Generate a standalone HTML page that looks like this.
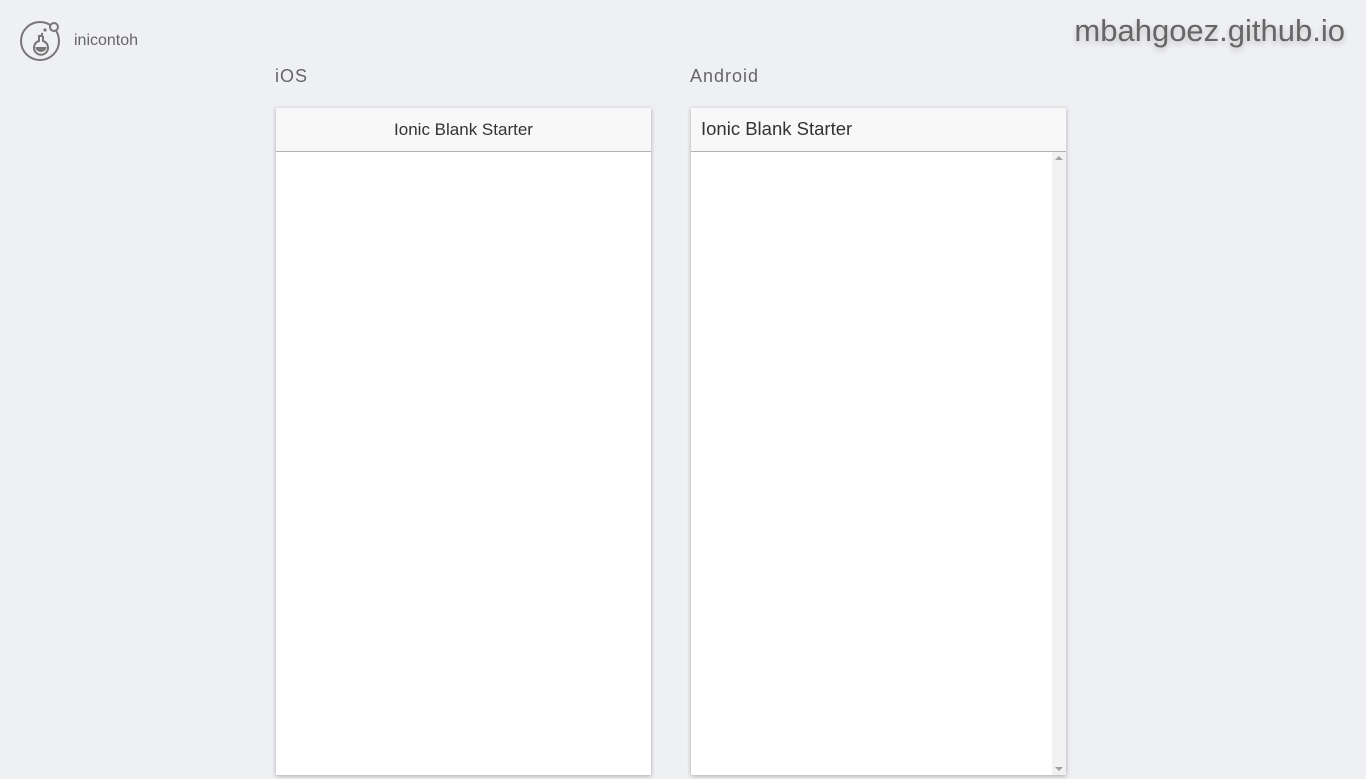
<!DOCTYPE html>
<html><head><style>
body{margin:0;width:1366px;height:779px;background:#eff0f3;font-family:"Liberation Sans",sans-serif;position:relative;overflow:hidden}
.a{position:absolute}
.frame{position:absolute;top:108px;width:375px;height:667px;background:#fff;box-shadow:0 1px 4px rgba(0,0,0,.3)}
.hdr{height:43px;background:#f8f8f8;border-bottom:1px solid #b2b2b2;color:#333;font-size:17px;line-height:43px}
</style></head><body>
<svg class="a" style="left:19px;top:19px" width="42" height="42" viewBox="0 0 42 42">
<circle cx="21" cy="22" r="19" fill="none" stroke="#777" stroke-width="2"/>
<circle cx="35" cy="8" r="4" fill="#eff0f3" stroke="#777" stroke-width="2"/>
<circle cx="26" cy="11" r="1.6" fill="#777"/><circle cx="23" cy="15" r="1.2" fill="#777"/>
<path d="M19 17h5M20 17v5a7 7 0 1 0 4 0v-5" fill="none" stroke="#777" stroke-width="2"/>
<path d="M16.5 28a5.5 5 0 0 0 11 0z" fill="#777"/>
</svg>
<div class="a" style="left:74px;top:32px;font-size:16px;color:#666">inicontoh</div>
<div class="a" style="right:21px;top:13px;font-size:31px;color:#666;text-shadow:0 3px 6px rgba(0,0,0,.2)">mbahgoez.github.io</div>
<div class="a" style="left:275px;top:66px;font-size:18px;color:#666;letter-spacing:1px">iOS</div>
<div class="a" style="left:690px;top:66px;font-size:18px;color:#666;letter-spacing:1px">Android</div>
<div class="frame" style="left:276px"><div class="hdr" style="text-align:center">Ionic Blank Starter</div></div>
<div class="frame" style="left:691px"><div class="hdr" style="padding-left:10px;font-size:18.5px;line-height:42px">Ionic Blank Starter</div>
<div class="a" style="right:0;top:44px;width:14px;height:623px;background:#f1f1f1"></div>
<div class="a" style="right:3px;top:48px;width:0;height:0;border:4px solid transparent;border-bottom-color:#a3a3a3;border-top:0"></div>
<div class="a" style="right:3px;bottom:4px;width:0;height:0;border:4px solid transparent;border-top-color:#a3a3a3;border-bottom:0"></div>
</div>
</body></html>
